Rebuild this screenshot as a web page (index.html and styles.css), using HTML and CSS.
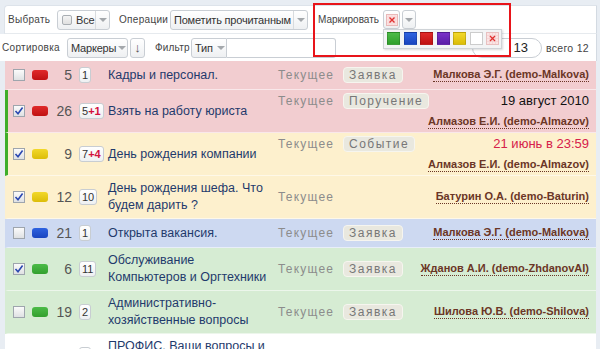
FILE: index.html
```html
<!DOCTYPE html>
<html lang="ru">
<head>
  <meta charset="UTF-8">
  <title>Документы</title>
  <link rel="stylesheet" href="styles.css">
</head>
<body>
<div class="page">

  <div class="toolbar">
    <div class="tb-row tb-row1">
      <span class="lbl lbl-sel">Выбрать</span>
      <span class="sel sel-all"><span class="tcb"></span><span class="sel-text">Все</span><span class="arr"></span></span>
      <span class="lbl lbl-ops">Операции</span>
      <span class="sel sel-ops"><span class="sel-text">Пометить прочитанным</span><span class="arr"></span></span>
      <span class="lbl lbl-mark">Маркировать</span>
      <span class="btn btn-mark">
        <svg width="12" height="12" viewBox="0 0 12 12"><rect x="0.5" y="0.5" width="11" height="11" fill="#fbe4e4" stroke="#e9b8b8"/><path d="M1 3h10M1 6h10M1 9h10M3 1v10M6 1v10M9 1v10" stroke="#f6d0d0" stroke-width="0.6"/><path d="M3.5 3.5l5 5M8.5 3.5l-5 5" stroke="#e03030" stroke-width="1.4"/></svg>
      </span>
      <span class="btn btn-arr"><span class="tri"></span></span>
    </div>
    <div class="tb-row tb-row2">
      <span class="lbl lbl-sort">Сортировка</span>
      <span class="sel sel-sort"><span class="sel-text">Маркеры</span><span class="arr arr-flat"></span></span>
      <span class="btn btn-down">↓</span>
      <span class="lbl lbl-filter">Фильтр</span>
      <span class="sel sel-type"><span class="sel-text">Тип</span><span class="arr arr-flat"></span></span>
      <span class="search"></span>
      <span class="pager">13</span>
      <span class="lbl total">всего 12</span>
    </div>
  </div>

  <div class="list">
    <div class="row pink">
      <span class="cb-cell"><span class="chk"></span></span>
      <span class="mark red"></span>
      <span class="num">5</span>
      <span class="cnt"><span class="badge">1</span></span>
      <span class="title">Кадры и персонал.</span>
      <div class="info">
        <div class="line"><span class="state">Текущее</span><span class="tag">Заявка</span><span class="person">Малкова Э.Г. (demo-Malkova)</span></div>
      </div>
    </div>

    <div class="row pink new">
      <span class="cb-cell"><span class="chk on"><svg width="10" height="10" viewBox="0 0 10 10"><path d="M1.5 5l2.5 2.7L8.6 1.6" fill="none" stroke="#2a47b0" stroke-width="1.6"/></svg></span></span>
      <span class="mark red"></span>
      <span class="num">26</span>
      <span class="cnt"><span class="badge">5<b>+1</b></span></span>
      <span class="title">Взять на работу юриста</span>
      <div class="info">
        <div class="line"><span class="state">Текущее</span><span class="tag">Поручение</span><span class="date">19 август 2010</span></div>
        <div class="line"><span class="person">Алмазов Е.И. (demo-Almazov)</span></div>
      </div>
    </div>

    <div class="row cream new">
      <span class="cb-cell"><span class="chk on"><svg width="10" height="10" viewBox="0 0 10 10"><path d="M1.5 5l2.5 2.7L8.6 1.6" fill="none" stroke="#2a47b0" stroke-width="1.6"/></svg></span></span>
      <span class="mark yellow"></span>
      <span class="num">9</span>
      <span class="cnt"><span class="badge">7<b>+4</b></span></span>
      <span class="title">День рождения компании</span>
      <div class="info">
        <div class="line"><span class="state">Текущее</span><span class="tag">Событие</span><span class="date late">21 июнь в 23:59</span></div>
        <div class="line"><span class="person">Алмазов Е.И. (demo-Almazov)</span></div>
      </div>
    </div>

    <div class="row cream">
      <span class="cb-cell"><span class="chk on"><svg width="10" height="10" viewBox="0 0 10 10"><path d="M1.5 5l2.5 2.7L8.6 1.6" fill="none" stroke="#2a47b0" stroke-width="1.6"/></svg></span></span>
      <span class="mark yellow"></span>
      <span class="num">12</span>
      <span class="cnt"><span class="badge">10</span></span>
      <span class="title">День рождения шефа. Что будем дарить ?</span>
      <div class="info">
        <div class="line"><span class="state">Текущее</span><span class="person">Батурин О.А. (demo-Baturin)</span></div>
      </div>
    </div>

    <div class="row blue">
      <span class="cb-cell"><span class="chk"></span></span>
      <span class="mark navy"></span>
      <span class="num">21</span>
      <span class="cnt"><span class="badge">1</span></span>
      <span class="title">Открыта вакансия.</span>
      <div class="info">
        <div class="line"><span class="state">Текущее</span><span class="tag">Заявка</span><span class="person">Малкова Э.Г. (demo-Malkova)</span></div>
      </div>
    </div>

    <div class="row green">
      <span class="cb-cell"><span class="chk on"><svg width="10" height="10" viewBox="0 0 10 10"><path d="M1.5 5l2.5 2.7L8.6 1.6" fill="none" stroke="#2a47b0" stroke-width="1.6"/></svg></span></span>
      <span class="mark grn"></span>
      <span class="num">6</span>
      <span class="cnt"><span class="badge">11</span></span>
      <span class="title">Обслуживание Компьютеров и Оргтехники</span>
      <div class="info">
        <div class="line"><span class="state">Текущее</span><span class="tag">Заявка</span><span class="person">Жданов А.И. (demo-ZhdanovAI)</span></div>
      </div>
    </div>

    <div class="row green">
      <span class="cb-cell"><span class="chk"></span></span>
      <span class="mark grn"></span>
      <span class="num">19</span>
      <span class="cnt"><span class="badge">2</span></span>
      <span class="title">Административно-хозяйственные вопросы</span>
      <div class="info">
        <div class="line"><span class="state">Текущее</span><span class="tag">Заявка</span><span class="person">Шилова Ю.В. (demo-Shilova)</span></div>
      </div>
    </div>

    <div class="row white">
      <span class="cb-cell"><span class="chk"></span></span>
      <span class="mark grn"></span>
      <span class="num">3</span>
      <span class="cnt"><span class="badge">4</span></span>
      <span class="title">ПРОФИС. Ваши вопросы и предложения</span>
      <div class="info">
        <div class="line"><span class="state">Текущее</span></div>
      </div>
    </div>
  </div>

  <!-- выпадающая палитра маркеров -->
  <div class="palette">
    <span class="sw sw-green"></span>
    <span class="sw sw-blue"></span>
    <span class="sw sw-red"></span>
    <span class="sw sw-purple"></span>
    <span class="sw sw-yellow"></span>
    <span class="sw sw-white"></span>
    <span class="sw sw-none">
      <svg width="13" height="13" viewBox="0 0 13 13"><rect x="0.5" y="0.5" width="12" height="12" fill="#fbe4e4" stroke="#e8c0c0"/><path d="M1 3.5h11M1 6.5h11M1 9.5h11M3.5 1v11M6.5 1v11M9.5 1v11" stroke="#f4cccc" stroke-width="0.6"/><path d="M4 4l5 5M9 4l-5 5" stroke="#e03030" stroke-width="1.3"/></svg>
    </span>
  </div>
  <div class="highlight"></div>

</div>
</body>
</html>
```

FILE: styles.css
```css
/* общий фон и шрифт */
body {
  margin: 0;
  background: #e8edf3;
  font-family: "Liberation Sans", Arial, sans-serif;
  overflow: hidden;
}

.page {
  position: relative;
  width: 597px;
  height: 349px;
  overflow: hidden;
}

/* панель инструментов */
.toolbar {
  padding-top: 5px;
}

.tb-row {
  display: flex;
  align-items: center;
  background: #fff;
  box-sizing: border-box;
  border-right: 1px solid #d3dae2;
}

.tb-row1 {
  height: 29px;
  margin-left: 4px;
  padding-left: 3px;
  border-top: 1px solid #dde3ea;
  border-left: 1px solid #dde3ea;
  border-bottom: 1px solid #e6eaee;
  border-top-left-radius: 4px;
}

.tb-row2 {
  height: 27px;
  padding-left: 2px;
  padding-right: 7px;
}

.lbl {
  font-size: 10px;
  letter-spacing: 0.3px;
  color: #444;
  white-space: nowrap;
}

.lbl-sel { width: 49px; }
.lbl-ops { width: 51px; margin-left: 9px; }
.lbl-mark { width: 65px; margin-left: 10px; letter-spacing: 0; }
.lbl-sort { width: 65px; }
.lbl-filter { width: 36px; margin-left: 10px; letter-spacing: 0.2px; }

.sel {
  display: inline-flex;
  align-items: center;
  height: 20px;
  box-sizing: border-box;
  border: 1px solid #c9ced4;
  border-radius: 3px;
  background: linear-gradient(#ffffff, #eef0f2);
  font-size: 11px;
  letter-spacing: -0.2px;
  color: #333;
}

.sel-text {
  flex: 1;
  padding: 0 0 0 3px;
  white-space: nowrap;
}

.arr {
  width: 13px;
  height: 100%;
  border-left: 1px solid #d8dbde;
  display: flex;
  align-items: center;
  justify-content: center;
}

.arr-flat {
  width: 11px;
  border-left: none;
}

.arr::after, .tri {
  content: "";
  display: block;
  border-left: 4px solid transparent;
  border-right: 4px solid transparent;
  border-top: 4px solid #a4a8ac;
}

.sel-all { width: 53px; }
.sel-all .sel-text { padding-left: 4px; }
.sel-ops { width: 138px; }
.sel-sort { width: 61px; }
.sel-type { width: 36px; border-radius: 3px 0 0 3px; }

.tcb {
  width: 8px;
  height: 8px;
  margin-left: 4px;
  border: 1px solid #a9aeb3;
  border-radius: 2px;
  background: linear-gradient(#f4f4f4, #e0e0e0);
}

.btn {
  display: inline-flex;
  align-items: center;
  justify-content: center;
  height: 19px;
  box-sizing: border-box;
  border: 1px solid #c9ced4;
  border-radius: 3px;
  background: linear-gradient(#ffffff, #eef0f2);
}

.btn-mark { width: 17px; }
.btn-arr { width: 14px; margin-left: 2px; }

.btn-down {
  width: 15px;
  height: 20px;
  margin-left: 2px;
  font-size: 13px;
  font-weight: bold;
  color: #555;
}

.search {
  width: 109px;
  height: 20px;
  box-sizing: border-box;
  border: 1px solid #c9ced4;
  border-left: none;
  border-radius: 0 3px 3px 0;
  background: #fff;
}

.pager {
  margin-left: auto;
  width: 70px;
  height: 20px;
  box-sizing: border-box;
  border: 1px solid #c9ced4;
  border-radius: 10px;
  padding-right: 13px;
  text-align: right;
  font-size: 13px;
  line-height: 18px;
  color: #222;
  background: #fff;
}

.total {
  margin-left: 4px;
  font-size: 10.5px;
}

/* список документов */
.list {
  margin-left: 5px;
  width: 591px;
}

.row {
  display: flex;
  align-items: center;
  min-height: 29px;
  box-sizing: border-box;
  padding: 4px 0;
  border-left: 3px solid transparent;
  border-bottom: 1px solid rgba(255, 255, 255, 0.55);
}

.row.new { border-left-color: #3fae2a; }

.pink { background: #f2cdd0; }
.cream { background: #fdf0cd; }
.blue { background: #cdd9f1; }
.green { background: #d6ecd3; }
.white { background: #fff; }

.cb-cell {
  padding-left: 5px;
  display: flex;
}

.chk {
  display: flex;
  align-items: center;
  justify-content: center;
  width: 12px;
  height: 12px;
  box-sizing: border-box;
  border: 1px solid #9ea5ad;
  background: linear-gradient(#fbfbfb, #dfe1e3);
}

.mark {
  width: 16px;
  height: 10px;
  margin-left: 7px;
  border-radius: 3px;
}

.red { background: linear-gradient(#e02a2a, #c01212); }
.yellow { background: linear-gradient(#f2d82a, #dcbd08); }
.navy { background: linear-gradient(#2f63e0, #1a45c0); }
.grn { background: linear-gradient(#4cbb48, #33a02e); }

.num {
  width: 24px;
  text-align: right;
  font-size: 14px;
  color: #555;
}

.cnt {
  width: 29px;
  margin-left: 7px;
  display: flex;
}

.badge {
  min-width: 12px;
  height: 16px;
  box-sizing: border-box;
  padding: 0 2px;
  border: 1px solid #c8cdd2;
  border-radius: 3px;
  background: linear-gradient(#ffffff, #eef0f2);
  font-size: 11px;
  line-height: 14px;
  text-align: center;
  color: #333;
}

.badge b {
  color: #d3103c;
}

.title {
  width: 166px;
  font-size: 12.5px;
  line-height: 17px;
  color: #1f3a6c;
}

.info {
  flex: 1;
  margin: -4px 0;
  padding-right: 7px;
}

.line {
  display: flex;
  align-items: center;
  height: 21px;
}

.state {
  width: 65px;
  margin-left: 4px;
  font-size: 12px;
  letter-spacing: 1.2px;
  color: #8c8c8c;
}

.tag {
  height: 16px;
  box-sizing: border-box;
  padding: 0 5px;
  border: 1px solid #f6f5ef;
  border-radius: 4px;
  background: #e9e8df;
  font-size: 12px;
  line-height: 14px;
  letter-spacing: 1.5px;
  color: #777;
}

.date {
  margin-left: auto;
  font-size: 13px;
  color: #111;
}

.date.late { color: #d6204a; }

.person {
  margin-left: auto;
  font-size: 11px;
  font-weight: bold;
  color: #6b3626;
  border-bottom: 1px dotted #6b3626;
  line-height: 13px;
}

/* палитра маркеров поверх панели */
.palette {
  position: absolute;
  left: 383px;
  top: 29px;
  width: 119px;
  height: 20px;
  box-sizing: border-box;
  display: flex;
  gap: 3.5px;
  padding: 2px 0 0 3px;
  background: #f3f4f5;
  border: 1px solid #cfd3d7;
  box-shadow: 1px 1px 2px rgba(0, 0, 0, 0.15);
}

.sw {
  width: 13px;
  height: 13px;
  box-sizing: border-box;
  border: 1px solid rgba(0, 0, 0, 0.15);
}

.sw-green { background: linear-gradient(#4cbb48, #30a02c); }
.sw-blue { background: linear-gradient(#2f63e0, #1a45c0); }
.sw-red { background: linear-gradient(#e02a2a, #c01212); }
.sw-purple { background: linear-gradient(#7a32c8, #5a1ea8); }
.sw-yellow { background: linear-gradient(#f2d82a, #dcbd08); }
.sw-white { background: #fff; border-color: #ccc; }
.sw-none { border: none; display: flex; }

.highlight {
  position: absolute;
  left: 313px;
  top: 3px;
  width: 198px;
  height: 54px;
  box-sizing: border-box;
  border: 2px solid #e8141a;
}
```
